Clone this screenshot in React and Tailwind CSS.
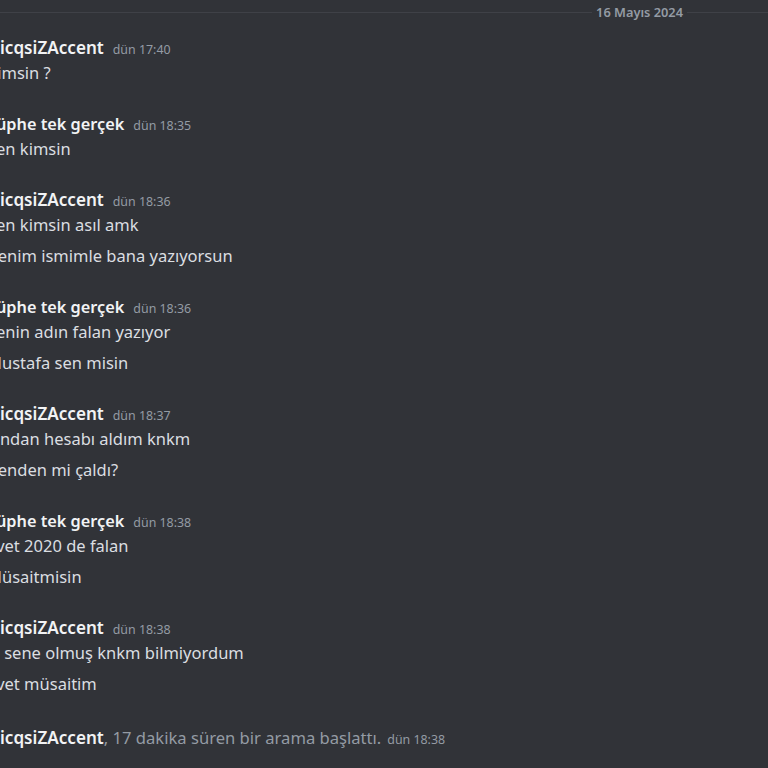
import React from "react";

const A = "icqsiZAccent";
const B = "Şüphe tek gerçek";

const groups = [
  { name: A, clip: false, time: "dün 17:40", lines: ["Kimsin ?"] },
  { name: B, clip: true, time: "dün 18:35", lines: ["Sen kimsin"] },
  { name: A, clip: false, time: "dün 18:36", lines: ["Sen kimsin asıl amk", "Benim ismimle bana yazıyorsun"] },
  { name: B, clip: true, time: "dün 18:36", lines: ["Senin adın falan yazıyor", "Mustafa sen misin"] },
  { name: A, clip: false, time: "dün 18:37", lines: ["Ondan hesabı aldım knkm", "Benden mi çaldı?"] },
  { name: B, clip: true, time: "dün 18:38", lines: ["Evet 2020 de falan", "Müsaitmisin"] },
  { name: A, clip: false, time: "dün 18:38", lines: ["O sene olmuş knkm bilmiyordum", "Evet müsaitim"] },
];

function Group({ g }) {
  return (
    <div className="flex flex-col">
      <div className="flex items-baseline h-[22px] leading-[22px]">
        <span
          className={`font-semibold text-[#f2f3f5] whitespace-nowrap ${
            g.clip ? "text-[16.3px]" : "ml-[13px] text-[17.1px]"
          }`}
        >
          {g.name}
        </span>
        <span className="ml-[9px] text-[12.4px] text-[#949ba4] whitespace-nowrap">{g.time}</span>
      </div>
      <div className="mt-[3px] flex flex-col gap-[9px]">
        {g.lines.map((l, i) => (
          <div key={i} className="h-[22px] leading-[22px] text-[16.5px] text-[#dbdee1] whitespace-nowrap">
            {l}
          </div>
        ))}
      </div>
    </div>
  );
}

export default function App() {
  return (
    <div
      className="w-[768px] h-[768px] bg-[#313338] overflow-hidden"
      style={{ fontFamily: '"Noto Sans", "Open Sans", sans-serif' }}
    >
      <div className="flex items-center h-[24px]">
        <div className="flex-1 h-px bg-[#3f4147]" />
        <span className="px-[4px] text-[12.8px] font-semibold text-[#949ba4] leading-[16px]">16 Mayıs 2024</span>
        <div className="w-[81px] h-px bg-[#3f4147]" />
      </div>

      <div className="-ml-[13px] mt-[13px] flex flex-col gap-[29px]">
        {groups.map((g, i) => (
          <Group key={i} g={g} />
        ))}
      </div>

      <div className="mt-[32px] h-[22px] leading-[22px] flex items-baseline whitespace-nowrap">
        <span className="text-[17.1px] font-semibold text-[#f2f3f5]">{A}</span>
        <span className="text-[16.6px] text-[#949ba4]">, 17 dakika süren bir arama başlattı.</span>
        <span className="ml-[6px] text-[12.4px] text-[#949ba4]">dün 18:38</span>
      </div>
    </div>
  );
}
